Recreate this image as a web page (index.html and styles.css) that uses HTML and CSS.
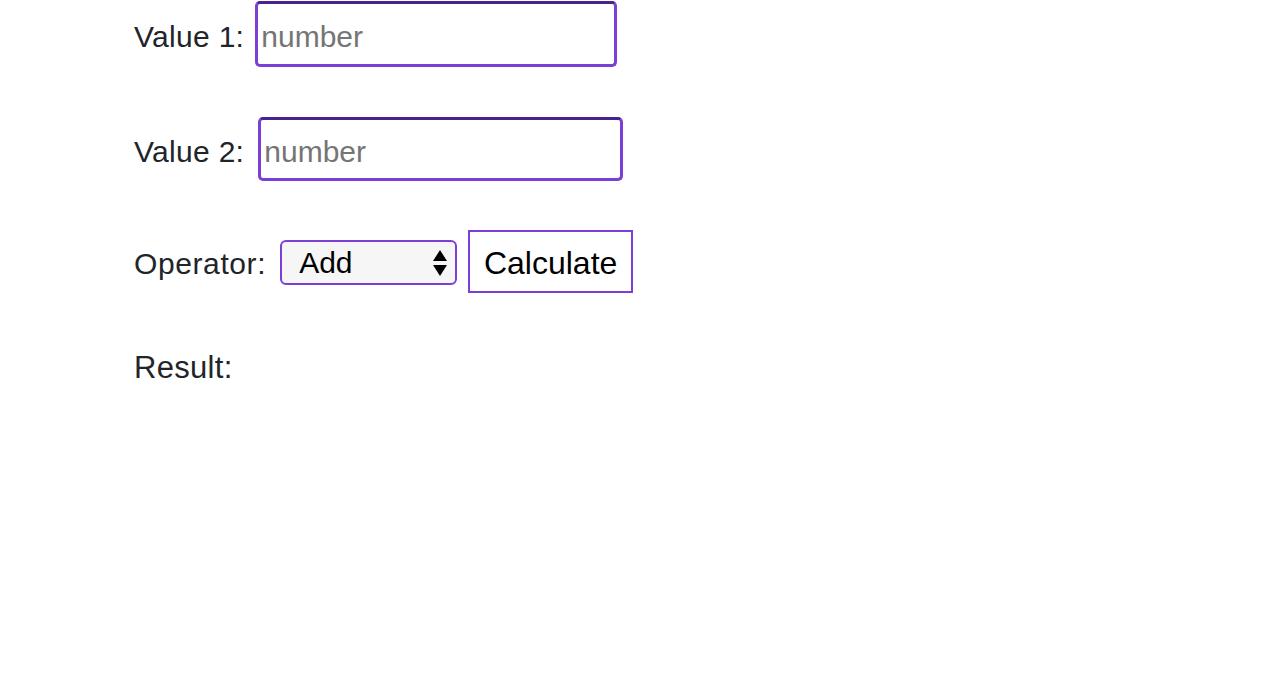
FILE: index.html
```html
<!DOCTYPE html>
<html>
<head>
<meta charset="utf-8">
<link rel="stylesheet" href="styles.css">
</head>
<body>
<div class="calc">
  <div class="row row-1">
    <label class="lbl lbl-1" for="v1">Value 1:</label>
    <input class="num num-1" id="v1" type="text" placeholder="number">
  </div>
  <div class="row row-2">
    <label class="lbl lbl-2" for="v2">Value 2:</label>
    <input class="num num-2" id="v2" type="text" placeholder="number">
  </div>
  <div class="row row-3">
    <label class="lbl lbl-3" for="op">Operator:</label>
    <div class="select-wrap">
      <select class="op" id="op">
        <option>Add</option>
        <option>Subtract</option>
        <option>Multiply</option>
        <option>Divide</option>
      </select>
      <svg class="arrows" width="16" height="28" viewBox="0 0 16 28"><path d="M8 1 L15 12 L1 12 Z M1 16 L15 16 L8 27 Z" fill="#000"/></svg>
    </div>
    <button class="btn">Calculate</button>
  </div>
  <div class="result">Result:</div>
</div>
</body>
</html>
```
FILE: styles.css
```css
html, body {
  margin: 0;
  padding: 0;
  background: #fff;
}
body {
  font-family: "Liberation Sans", Arial, sans-serif;
  color: #212529;
}
.calc {
  padding-left: 134px;
  display: flex;
  flex-direction: column;
}
.row {
  display: flex;
  align-items: center;
}
.lbl {
  font-size: 30px;
  letter-spacing: 0.3px;
  color: #212529;
  padding-top: 5px;
}
.lbl-1 { margin-right: 11px; }
.lbl-2 { margin-right: 14px; }
.lbl-3 { margin-right: 14px; letter-spacing: 0.6px; }
.num {
  box-sizing: border-box;
  border: 3px solid #7b3fd6;
  border-top-color: #4a2190;
  border-radius: 5px;
  background: #fff;
  font-family: "Liberation Sans", Arial, sans-serif;
  font-size: 30px;
  padding: 5px 4px 0 3px;
  color: #212529;
  outline: none;
}
.num::placeholder {
  color: #757575;
}
.row-1 {
  margin-top: 1px;
  height: 66px;
}
.num-1 {
  width: 362px;
  height: 66px;
}
.row-2 {
  margin-top: 50px;
  height: 64px;
}
.num-2 {
  width: 365px;
  height: 64px;
}
.row-3 {
  margin-top: 49px;
  height: 63px;
}
.select-wrap {
  position: relative;
  margin-top: 2px;
}
.op {
  appearance: none;
  -webkit-appearance: none;
  box-sizing: border-box;
  width: 177px;
  height: 45px;
  border: 2px solid #7b3fd6;
  border-radius: 6px;
  background: #f6f6f6;
  font-family: "Liberation Sans", Arial, sans-serif;
  font-size: 30px;
  color: #000;
  padding: 0 0 0 17px;
  outline: none;
}
.arrows {
  position: absolute;
  right: 9px;
  top: 9px;
  pointer-events: none;
}
.btn {
  box-sizing: border-box;
  margin-left: 11px;
  height: 63px;
  width: 165px;
  border: 2px solid #7b3fd6;
  border-radius: 0;
  background: #fff;
  font-family: "Liberation Sans", Arial, sans-serif;
  font-size: 32px;
  color: #000;
  padding: 3px 0 0 0;
}
.result {
  margin-top: 57px;
  font-size: 31px;
  letter-spacing: 0.3px;
  color: #212529;
}
```
